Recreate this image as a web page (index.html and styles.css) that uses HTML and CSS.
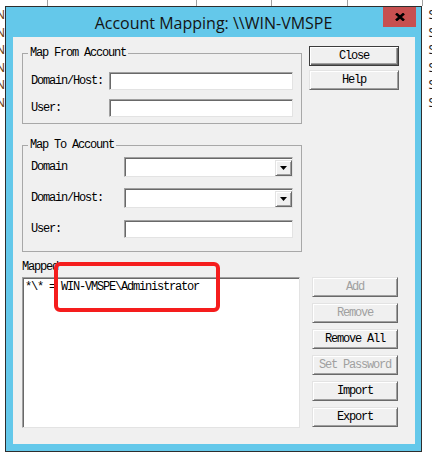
FILE: index.html
```html
<!DOCTYPE html>
<html>
<head>
<meta charset="utf-8">
<title>Account Mapping</title>
<link rel="stylesheet" href="styles.css">
</head>
<body>
<div class="desk">
  <div class="behind">
    <div class="hdr">
      <span class="col c1"></span><span class="col c2"></span><span class="col c3"></span><span class="col c4"></span><span class="col c5"></span>
    </div>
    <div class="row"><span class="lt">N</span><span class="rt">S</span></div>
    <div class="row"><span class="lt">N</span><span class="rt">S</span></div>
    <div class="row"><span class="lt">N</span><span class="rt">S</span></div>
    <div class="row"><span class="lt">N</span><span class="rt">S</span></div>
    <div class="row"><span class="lt">N</span><span class="rt">S</span></div>
    <div class="row"><span class="lt">N</span><span class="rt">S</span></div>
  </div>

  <div class="window">
    <div class="titlebar">
      <span class="title">Account Mapping: \\WIN-VMSPE</span>
      <button class="close-x" aria-label="Close">
        <svg width="10" height="8" viewBox="0 0 10 8"><path d="M1 0.5 L9 7.5 M9 0.5 L1 7.5" stroke="#000" stroke-width="2.6" fill="none"/></svg>
      </button>
    </div>
    <div class="client">
      <div class="top">
        <div class="groups">
          <fieldset class="grp from">
            <legend>Map From Account</legend>
            <div class="field first"><label>Domain/Host:</label><div class="edit"></div></div>
            <div class="field"><label>User:</label><div class="edit"></div></div>
          </fieldset>
          <fieldset class="grp to">
            <legend>Map To Account</legend>
            <div class="field first"><label>Domain</label><div class="edit combo"><span class="drop"><svg width="7" height="4" viewBox="0 0 7 4"><polygon points="0,0 7,0 3.5,4" fill="#000"/></svg></span></div></div>
            <div class="field f2"><label>Domain/Host:</label><div class="edit combo"><span class="drop"><svg width="7" height="4" viewBox="0 0 7 4"><polygon points="0,0 7,0 3.5,4" fill="#000"/></svg></span></div></div>
            <div class="field f3"><label>User:</label><div class="edit"></div></div>
          </fieldset>
        </div>
        <div class="side">
          <button class="btn def">Close</button>
          <button class="btn">Help</button>
        </div>
      </div>

      <div class="mapped">Mapped</div>

      <div class="bottom">
        <div class="listbox">
          <div class="item">*\* = WIN-VMSPE\Administrator</div>
        </div>
        <div class="actions">
          <button class="btn" disabled>Add</button>
          <button class="btn" disabled>Remove</button>
          <button class="btn">Remove All</button>
          <button class="btn" disabled>Set Password</button>
          <button class="btn">Import</button>
          <button class="btn">Export</button>
        </div>
      </div>

      <div class="mark"></div>
    </div>
  </div>
</div>
</body>
</html>
```
FILE: styles.css
```css
html, body {
  margin: 0;
  padding: 0;
  background: #fff;
}

body {
  width: 432px;
  height: 461px;
  overflow: hidden;
  font-family: "Liberation Mono", monospace;
}

.desk {
  position: relative;
  width: 432px;
  height: 461px;
  overflow: hidden;
}

/* list view sitting behind the dialog */
.behind {
  width: 432px;
}

.hdr {
  display: flex;
  height: 6px;
}

.col {
  box-sizing: border-box;
  height: 6px;
  border-right: 1px solid #a0a0a0;
}
.c1 { width: 48px; }
.c2 { width: 149px; }
.c3 { width: 75px; }
.c4 { width: 76px; }
.c5 { width: 75px; }

.row {
  display: flex;
  justify-content: space-between;
  height: 17.5px;
  line-height: 17.5px;
  font-family: "Noto Sans", sans-serif;
  font-size: 12px;
  color: #1e1e1e;
}

.row .lt {
  margin-left: -4px;
  color: #6a3a10;
}

.row .rt {
  margin-right: -3px;
}

/* dialog window */
.window {
  position: absolute;
  left: 5px;
  top: 6px;
  width: 417px;
  height: 446px;
  box-sizing: border-box;
  border: 1px solid #2e2e2e;
  background: #64c8ea;
  display: flex;
  flex-direction: column;
}

.titlebar {
  position: relative;
  height: 30px;
  flex: none;
  display: flex;
  align-items: center;
  justify-content: center;
}

.title {
  font-family: "Open Sans", sans-serif;
  font-size: 16px;
  color: #141414;
  padding-top: 1px;
}

.close-x {
  position: absolute;
  right: 5px;
  top: 0;
  width: 33px;
  height: 20px;
  padding: 0;
  border: none;
  background: #c75050;
  display: flex;
  align-items: center;
  justify-content: center;
}

.client {
  flex: 1;
  position: relative;
  margin: 0 6px 7px 7px;
  padding: 9px 0 0 9px;
  background: #f0f0f0;
  display: flex;
  flex-direction: column;
  font-size: 12px;
  letter-spacing: -1.2px;
  color: #000;
}

.top {
  display: flex;
  align-items: flex-start;
  gap: 7px;
}

.groups {
  width: 280px;
  padding-top: 1px;
  display: flex;
  flex-direction: column;
  gap: 15px;
}

.grp {
  margin: 0;
  padding: 0 8px;
  min-width: 0;
  box-sizing: border-box;
  width: 280px;
  border: 1px solid #a8a8a8;
}

.grp legend {
  padding: 0 2px;
  margin-left: -3px;
  line-height: 12px;
}

.from { padding-bottom: 6px; }
.to { padding-bottom: 13px; }

.field {
  display: flex;
  align-items: center;
}

.field label {
  line-height: 12px;
}

.from .field label { width: 78px; }
.to .field label { width: 93px; }

.from .field.first { margin-top: 13px; }
.from .field + .field { margin-top: 9px; }

.to .field.first { margin-top: 6px; }
.to .f2 { margin-top: 11px; }
.to .f3 { margin-top: 12px; }

/* sunken edit box */
.edit {
  box-sizing: border-box;
  height: 18px;
  background: #fff;
  border-style: solid;
  border-width: 1px;
  border-color: #a0a0a0 #e3e3e3 #e3e3e3 #a0a0a0;
  box-shadow: inset 1px 1px 0 #696969;
}

.from .edit { width: 184px; }
.to .edit { width: 169px; }

.combo {
  height: 20px;
  display: flex;
  justify-content: flex-end;
  align-items: center;
}

.drop {
  box-sizing: border-box;
  width: 17px;
  height: 16px;
  margin-top: 1px;
  background: #f0f0f0;
  border-style: solid;
  border-width: 1px;
  border-color: #e3e3e3 #696969 #696969 #e3e3e3;
  box-shadow: inset 1px 1px 0 #fff, inset -1px -1px 0 #a0a0a0;
  display: flex;
  align-items: center;
  justify-content: center;
}

.drop svg { display: block; }

.side {
  display: flex;
  flex-direction: column;
  gap: 4px;
}

/* raised push button */
.btn {
  box-sizing: border-box;
  height: 20px;
  padding: 0;
  font-family: "Liberation Mono", monospace;
  font-size: 12px;
  letter-spacing: -1.2px;
  color: #000;
  background: #f0f0f0;
  border-style: solid;
  border-width: 1px;
  border-color: #e3e3e3 #696969 #696969 #e3e3e3;
  box-shadow: inset 1px 1px 0 #fff, inset -1px -1px 0 #a0a0a0;
}

.side .btn { width: 90px; }

.btn.def {
  border-color: #3c3c3c;
  box-shadow: inset 1px 1px 0 #fff, inset -1px -1px 0 #696969, inset -2px -2px 0 #a0a0a0;
}

.btn:disabled {
  color: #a0a0a0;
}

.mapped {
  margin-top: 9px;
  line-height: 12px;
}

.bottom {
  margin-top: 4px;
  display: flex;
  align-items: flex-start;
  gap: 12px;
}

.listbox {
  box-sizing: border-box;
  width: 278px;
  height: 151px;
  background: #fff;
  border-style: solid;
  border-width: 1px;
  border-color: #a0a0a0 #e3e3e3 #e3e3e3 #a0a0a0;
  box-shadow: inset 1px 1px 0 #696969;
  padding: 3px 0 0 2px;
}

.item {
  line-height: 12px;
  white-space: nowrap;
}

.actions {
  width: 86px;
  display: flex;
  flex-direction: column;
  gap: 6px;
}

.actions .btn { width: 86px; }

/* red highlight drawn over the list */
.mark {
  position: absolute;
  left: 41px;
  top: 225px;
  width: 166px;
  height: 50px;
  box-sizing: border-box;
  border: 4px solid #f51d1d;
  border-radius: 6px;
}
```
